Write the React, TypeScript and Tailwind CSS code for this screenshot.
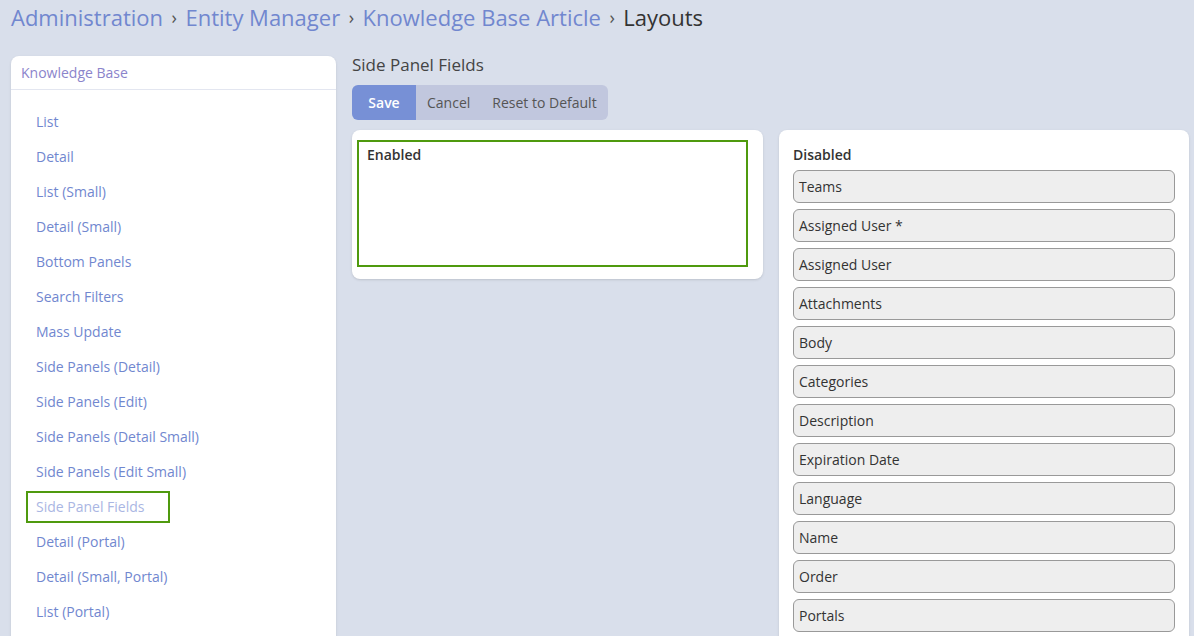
// Layout manager page: Side Panel Fields

const layoutLinks = [
  "List",
  "Detail",
  "List (Small)",
  "Detail (Small)",
  "Bottom Panels",
  "Search Filters",
  "Mass Update",
  "Side Panels (Detail)",
  "Side Panels (Edit)",
  "Side Panels (Detail Small)",
  "Side Panels (Edit Small)",
  "Side Panel Fields",
  "Detail (Portal)",
  "Detail (Small, Portal)",
  "List (Portal)",
];

const disabledFields = [
  "Teams",
  "Assigned User *",
  "Assigned User",
  "Attachments",
  "Body",
  "Categories",
  "Description",
  "Expiration Date",
  "Language",
  "Name",
  "Order",
  "Portals",
];

export default function App() {
  const active = "Side Panel Fields";

  return (
    <div
      className="min-h-screen h-[636px] overflow-hidden bg-[#d9dfeb] text-[#333]"
      style={{ fontFamily: '"Open Sans", "Liberation Sans", sans-serif' }}
    >
      {/* Breadcrumb */}
      <div className="px-[11px] pt-[1px] h-[56px] text-[22px] leading-[32px] flex items-start gap-[8.5px]">
        <span className="text-[#7187cf]">Administration</span>
        <span className="text-[#555] text-[18px]">›</span>
        <span className="text-[#7187cf]">Entity Manager</span>
        <span className="text-[#555] text-[18px]">›</span>
        <span className="text-[#7187cf]">Knowledge Base Article</span>
        <span className="text-[#555] text-[18px]">›</span>
        <span className="text-[#333]">Layouts</span>
      </div>

      <div className="flex gap-4 px-[11px] items-start">
        {/* Left menu */}
        <div className="w-[325px] shrink-0 bg-white rounded-lg shadow-sm">
          <div className="h-[34px] px-[10px] flex items-center text-[14px] text-[#8b84cb] border-b border-[#e3e6f0]">
            Knowledge Base
          </div>
          <div className="pt-[14px] pb-4 flex flex-col">
            {layoutLinks.map((name) =>
              name === active ? (
                <div key={name} className="h-[35px] flex items-center pl-[15px]">
                  <span className="border-2 border-[#4f9a0e] h-[32px] w-[144px] flex items-center pl-[8px] text-[14px] text-[#aab6e3]">
                    {name}
                  </span>
                </div>
              ) : (
                <div key={name} className="h-[35px] flex items-center pl-[25px] text-[14px] text-[#7187cf]">
                  {name}
                </div>
              )
            )}
          </div>
        </div>

        {/* Main area */}
        <div className="flex-1 flex flex-col">
          <div className="text-[17px] leading-[20px] -mt-[1px] h-[30px] text-[#444]">Side Panel Fields</div>
          <div className="flex h-[35px] rounded-md overflow-hidden w-fit text-[14px]">
            <button className="w-[64px] bg-[#7790d6] text-white font-semibold">Save</button>
            <button className="px-[11px] bg-[#c1c7de] text-[#555]">Cancel</button>
            <button className="pl-[11px] pr-[11px] bg-[#c1c7de] text-[#555]">Reset to Default</button>
          </div>

          <div className="flex gap-4 mt-[10px] items-start">
            {/* Enabled */}
            <div className="w-[411px] bg-white rounded-lg pl-[5px] pt-[10px] pr-[15px] pb-[12px] shadow-sm">
              <div className="border-2 border-[#4f9a0e] h-[127px] px-[8px] pt-[2px]">
                <div className="text-[14px] font-semibold text-[#333]">Enabled</div>
              </div>
            </div>

            {/* Disabled */}
            <div className="w-[410px] bg-white rounded-lg px-[14px] pt-[15px] pb-4 shadow-sm">
              <div className="text-[14px] font-semibold text-[#333] h-[25px] leading-[20px]">Disabled</div>
              <div className="flex flex-col gap-[6px]">
                {disabledFields.map((f) => (
                  <div
                    key={f}
                    className="h-[33px] border border-[#999] bg-[#eeeeee] rounded-[6px] flex items-center px-[5px] text-[14px] text-[#333]"
                  >
                    {f}
                  </div>
                ))}
              </div>
            </div>
          </div>
        </div>
      </div>
    </div>
  );
}
